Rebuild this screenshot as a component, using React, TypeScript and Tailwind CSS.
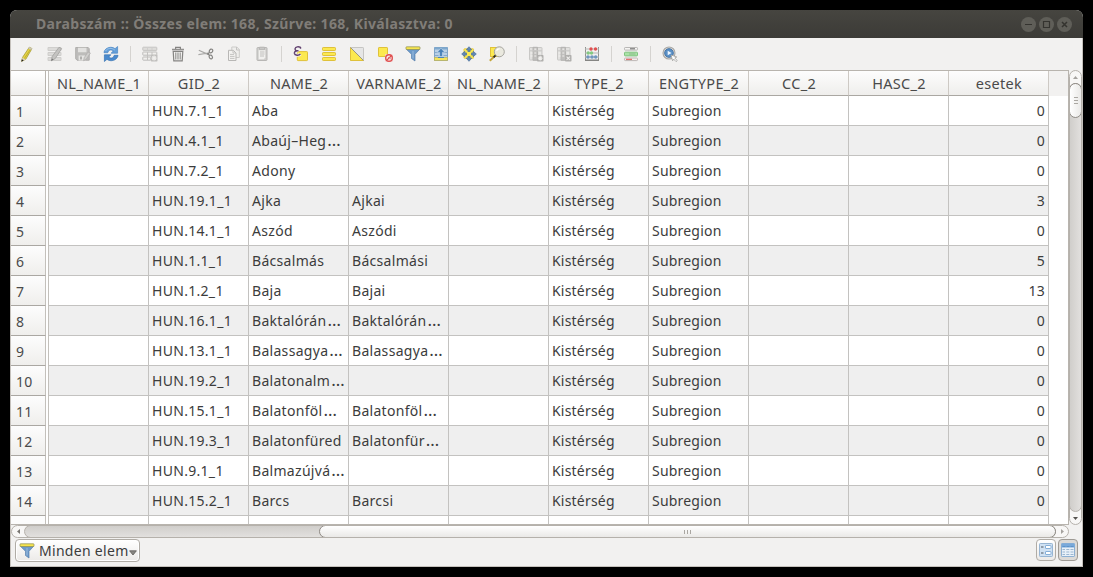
import React from "react";

const rows: [string, string, string, string][] = [
  ["HUN.7.1_1", "Aba", "", "0"],
  ["HUN.4.1_1", "Abaúj–Heg…", "", "0"],
  ["HUN.7.2_1", "Adony", "", "0"],
  ["HUN.19.1_1", "Ajka", "Ajkai", "3"],
  ["HUN.14.1_1", "Aszód", "Aszódi", "0"],
  ["HUN.1.1_1", "Bácsalmás", "Bácsalmási", "5"],
  ["HUN.1.2_1", "Baja", "Bajai", "13"],
  ["HUN.16.1_1", "Baktalórán…", "Baktalórán…", "0"],
  ["HUN.13.1_1", "Balassagya…", "Balassagya…", "0"],
  ["HUN.19.2_1", "Balatonalm…", "", "0"],
  ["HUN.15.1_1", "Balatonföl…", "Balatonföl…", "0"],
  ["HUN.19.3_1", "Balatonfüred", "Balatonfür…", "0"],
  ["HUN.9.1_1", "Balmazújvá…", "", "0"],
  ["HUN.15.2_1", "Barcs", "Barcsi", "0"],
];

const headers = ["NL_NAME_1", "GID_2", "NAME_2", "VARNAME_2", "NL_NAME_2", "TYPE_2", "ENGTYPE_2", "CC_2", "HASC_2", "esetek"];

function Icon({ children, size = 16 }: { children: React.ReactNode; size?: number }) {
  return (
    <svg width={size} height={size} viewBox="0 0 16 16" fill="none" className="block shrink-0">
      {children}
    </svg>
  );
}

const Pencil = () => (
  <Icon>
    <path d="M10.3 1.2 13 2.6 6.8 13.2 2.6 15.3 3.6 11.3Z" fill="#e6d548" stroke="#a69a35" strokeWidth=".8" />
    <path d="M12 2.5 5.2 12.7" stroke="#c0ae2d" />
    <path d="M10.2.9 13.2 2.4 12.3 4 9.3 2.4Z" fill="#c9c6bd" />
    <path d="M3.3 11.5 6.7 13.4 2.6 15.5Z" fill="#d9cdb4" />
    <path d="m2.3 15.7.6-2.4 1.8 1.1Z" fill="#222" />
  </Icon>
);
const MultiEdit = () => (
  <Icon>
    <path d="M1 1.5h13v3H1zM1 6.5h13v3H1zM1 11.5h13v3H1z" fill="#dcdbd9" stroke="#cfcecc" />
    <path d="m12 1.3 2.6 1.3-6.2 9.8-4 2.4.7-4.2Z" fill="#c4c3c1" stroke="#a2a19f" strokeWidth=".8" />
    <path d="m4 15 1-2.5 1.5 1Z" fill="#777" />
  </Icon>
);
const Save = () => (
  <Icon>
    <path d="M.7 1.5h12.5l1 1.2v11.5H2L.7 12.8Z" fill="#bdbcba" stroke="#b0afad" />
    <path d="M3 1.8h8.5v4.4H3z" fill="#e3e2e0" />
    <path d="M3.6 9.4h7v5h-7z" fill="#e6e5e3" />
    <path d="M5 10.5h2v3H5z" fill="#b0afad" />
    <path d="m13 6 2.4 1-4.2 6.4-2.6 1.3.6-3Z" fill="#cfcecc" stroke="#adacaa" strokeWidth=".7" />
  </Icon>
);
const Refresh = () => (
  <Icon>
    <path d="M1 6.2C2 1.6 8.5-.2 12 2.7L14.6.5v6.7H8.1L10.2 5C8 3 5.5 4 4.8 6.7H1Z" fill="#649fd9" stroke="#4a86c4" strokeWidth=".7" />
    <path d="M15 9.8c-1 4.6-7.5 6.4-11 3.5l-2.6 2.2V8.8h6.5L5.8 11c2.2 2 4.7 1 5.4-1.7H15Z" fill="#4a8ace" stroke="#3874b3" strokeWidth=".7" />
    <path d="M2.5 5C4.5 1.8 8.8 1.6 11.8 4" stroke="#a7caec" strokeWidth=".8" />
  </Icon>
);
const AddRow = () => (
  <Icon>
    <rect x=".8" y="1.2" width="14" height="3.2" rx=".5" fill="#deddda" stroke="#c5c4c2" />
    <rect x=".8" y="6" width="14" height="3.2" rx=".5" fill="#f0efed" stroke="#bdbcba" />
    <rect x=".8" y="11" width="8" height="3.2" rx=".5" fill="#f0efed" stroke="#bdbcba" />
    <path d="M5.5 6v8M10 6v3" stroke="#c3c2c0" />
    <path d="M5.5 1.5v2.5M10 1.5v2.5" stroke="#cfcecc" />
    <rect x="8.8" y="8.8" width="6.7" height="6.7" rx=".8" fill="#c0bfbd" />
    <path d="M12.1 9.6v5M9.6 12.1h5m-4.3-1.8 3.6 3.6m0-3.6-3.6 3.6" stroke="#efeeec" strokeWidth="1.2" />
  </Icon>
);
const Trash = () => (
  <Icon>
    <path d="M5.6 3V1.4h4.8V3M2 3.5h12M3.2 5.3h9.6l-.6 9.5H3.8Z" stroke="#858482" strokeWidth="1.2" />
    <path d="M5.8 6.5v7M8 6.5v7M10.2 6.5v7" stroke="#8e8d8b" strokeWidth="1.1" />
    <path d="M2 3.5h12" stroke="#92918f" strokeWidth="1.4" />
  </Icon>
);
const Cut = () => (
  <Icon>
    <path d="M.8 4.2 10 8.4M.4 8.7 10.5 7" stroke="#aaa9a7" strokeWidth="1.2" />
    <path d="M9.2 7.7c1-.1 1.8-.5 2.2-1.2M9.5 8c1 .1 1.6.7 2 1.5" stroke="#858482" strokeWidth="1.3" />
    <ellipse cx="13" cy="5" rx="1.6" ry="1.9" stroke="#858482" strokeWidth="1.2" transform="rotate(30 13 5)" />
    <ellipse cx="12.8" cy="11" rx="1.6" ry="1.9" stroke="#858482" strokeWidth="1.2" transform="rotate(-30 12.8 11)" />
  </Icon>
);
const Copy = () => (
  <Icon>
    <path d="M5.8 1h5l2.5 2.5v8H5.8Z" fill="#efeeec" stroke="#cccbc9" />
    <path d="M10.5 1v3h3" stroke="#c5c4c2" />
    <path d="M2.5 4.3h4.8L10 7v7.5H2.5Z" fill="#f3f2f0" stroke="#b8b7b5" />
    <path d="M7 4.3V7h3M4 8.4h4M4 10.4h4.5M4 12.4h4.5" stroke="#c4c3c1" />
  </Icon>
);
const Paste = () => (
  <Icon>
    <rect x="3" y="1.5" width="10" height="13" rx=".7" fill="#cfcecc" stroke="#b8b7b5" />
    <path d="M4.7 3.7h6.6v7.8l-1.5 1.8H4.7Z" fill="#f1f0ee" />
    <path d="M5.5 1.2h5v2.5h-5z" fill="#c9c8c6" stroke="#b8b7b5" />
    <path d="M6 6h4.5M6 8h4.5M6 10h4" stroke="#c0bfbd" />
  </Icon>
);
const Expression = () => (
  <Icon>
    <rect x="4.3" y="5.6" width="10.2" height="9" rx=".7" fill="#fce94f" stroke="#dfc13a" />
    <path d="M7.5 2.7V1.4C5.7.4 2.5.5 2.1 2.6 1.9 4 3 4.8 4.5 4.8h1-1C2.8 4.8 1.2 5.6 1.4 7.4 1.7 9.6 6 9.8 7.4 8" stroke="#f3f2f0" strokeWidth="3" />
    <path d="M7.5 2.7V1.4C5.7.4 2.5.5 2.1 2.6 1.9 4 3 4.8 4.5 4.8h1-1C2.8 4.8 1.2 5.6 1.4 7.4 1.7 9.6 6 9.8 7.4 8" stroke="#624270" strokeWidth="1.4" />
  </Icon>
);
const SelectAll = () => (
  <Icon>
    {[1.5, 6.5, 11.5].map((y) => (
      <rect key={y} x="1.5" y={y} width="13" height="3" rx=".7" fill="#fce94f" stroke="#dfc13a" />
    ))}
  </Icon>
);
const Invert = () => (
  <Icon>
    <rect x="1.5" y="1.5" width="13" height="13" rx=".6" fill="#e6e6e6" stroke="#c6c5c3" />
    <path d="M1.5 1.5v13h13Z" fill="#fce94f" />
    <path d="M14.5 14.5h-13v-13" stroke="#dfc13a" />
    <path d="m1.5 1.5 13 13" stroke="#8f8c80" strokeWidth=".9" />
  </Icon>
);
const Deselect = () => (
  <Icon>
    <rect x="1.5" y="1.5" width="9" height="9" rx=".6" fill="#fce94f" stroke="#dfc13a" />
    <rect x="8" y="8" width="8" height="8" rx="1" fill="#f3dddd" />
    <circle cx="12" cy="12" r="3.3" fill="#f6e6e6" stroke="#e05050" strokeWidth="1.4" />
    <path d="m9.6 14.4 4.8-4.8" stroke="#dc4949" strokeWidth="1.2" />
    <path d="M11 11.5h2.2v1.8" stroke="#dc6969" strokeWidth=".8" />
  </Icon>
);
const Funnel = ({ size = 16 }: { size?: number }) => (
  <Icon size={size}>
    <path d="M1.3 3.2h13.4L10 8.3V15L6.5 12.5V8.3Z" fill="#6d9ac9" stroke="#5880ad" strokeWidth=".7" />
    <path d="M8 5v7.5" stroke="#8eb2d8" strokeWidth="1.4" />
    <rect x="1" y=".8" width="14" height="2.7" rx=".6" fill="#f7e54d" stroke="#8a8c58" strokeWidth=".7" />
  </Icon>
);
const MoveTop = () => (
  <Icon>
    <path d="M1.5 1.5h13v13h-13z" fill="#b9d0e6" stroke="#7fa4c7" />
    <path d="M1.5 1.5h13v2h-13z" fill="#7fa8ce" />
    <path d="M2 6.5h3.5M10.5 6.5H14M2 9.5h3.5M10.5 9.5H14" stroke="#86a9ca" />
    <path d="m8 2.2 3.9 4.2H9.4v4.1H6.6V6.4H4.1Z" fill="#4780b8" stroke="#d5e4f2" strokeWidth=".5" />
    <rect x="1.5" y="11.5" width="13" height="3" fill="#f5e45b" stroke="#b9b268" strokeWidth=".8" />
    <path d="M5 11.5h6" stroke="#4c85bb" />
  </Icon>
);
const Pan = () => (
  <Icon>
    <rect x="3" y="2.8" width="9.5" height="9.5" rx=".5" fill="#fce94f" stroke="#e6cc4a" />
    <path d="m8 .7 2.7 3.1H9.1v1.7H6.9V3.8H5.3ZM8 15.3l2.7-3.1H9.1v-1.7H6.9v1.7H5.3ZM.7 8l3.1-2.7v1.6h1.7v2.2H3.8v1.6ZM15.3 8l-3.1-2.7v1.6h-1.7v2.2h1.7v1.6Z" fill="#6288b5" stroke="#4c719c" strokeWidth=".7" />
  </Icon>
);
const ZoomTo = () => (
  <Icon>
    <rect x="1.5" y="1.5" width="8.5" height="9" fill="#fce94f" stroke="#dfc13a" />
    <path d="M5.8 10 .8 14.8" stroke="#c5a638" strokeWidth="2" />
    <path d="m7 8.9-2.4 2.4" stroke="#292826" strokeWidth="1.8" />
    <circle cx="10.3" cy="5.8" r="5" fill="#e9e8dd" fillOpacity=".95" stroke="#a6a59f" />
    <path d="M7.6 4.8c.5-1.5 1.7-2 3-1.9" stroke="#fff" strokeWidth="1.3" />
  </Icon>
);
const FieldIcon = ({ remove = false }: { remove?: boolean }) => (
  <Icon>
    <rect x="1.5" y="1.5" width="12.5" height="12.5" rx=".5" fill="#e2e1df" stroke="#c9c8c6" />
    <path d="M5 1.3h4.5v13H5z" fill="#c0bfbd" stroke="#b6b5b3" />
    <path d="M1.5 4.8h12.5" stroke="#c9c8c6" />
    <path d="M2.5 7h2M2.5 10h2M6.3 3.2h2M6.3 7h2M6.3 10h2M11 7h2" stroke="#f2f1ef" strokeWidth="1.2" />
    <rect x="9" y="9" width="6.5" height="6.5" rx=".8" fill="#b0afad" />
    <path d={remove ? "m10.6 10.6 3.3 3.3m0-3.3-3.3 3.3" : "M12.2 9.8v4.8M9.8 12.2h4.8m-4-1.6 3.2 3.2m0-3.2-3.2 3.2"} stroke="#f0efed" strokeWidth="1.1" />
  </Icon>
);
const Abacus = () => (
  <Icon>
    <path d="M1.5 1v14M14.5 1v14" stroke="#90938f" />
    <path d="M1 3h14M1 7h14M1 11h14" stroke="#b6b7b5" />
    <path d="M1 14.3h14" stroke="#858583" strokeWidth="1.4" />
    {[7, 11.5].map((x) => <circle key={x} cx={x} cy="3" r="1.7" fill="#e05050" />)}
    {[4.2, 7.5].map((x) => <circle key={x} cx={x} cy="7" r="1.7" fill="#84c882" />)}
    {[4, 8, 11.7].map((x) => <circle key={x} cx={x} cy="11" r="1.8" fill="#7097be" />)}
  </Icon>
);
const Conditional = () => (
  <Icon>
    <rect x="1.5" y="1.5" width="13" height="2.6" rx=".7" fill="#f5f4f2" stroke="#b8b7b5" />
    <path d="M7 2.8h5" stroke="#666" />
    <rect x="1.5" y="6.2" width="13" height="3.7" rx=".7" fill="#a9e2a7" stroke="#80c480" />
    <path d="M6 8h6.5" stroke="#8cba8a" />
    <rect x="1.5" y="12" width="13" height="2.6" rx=".7" fill="#f7efed" stroke="#beb8b6" />
    <path d="M3 13.3h6" stroke="#df5050" />
  </Icon>
);
const Action = () => (
  <Icon>
    <circle cx="7" cy="7" r="6" fill="#d9d8d6" stroke="#a9a8a6" strokeWidth="1.1" />
    <circle cx="7" cy="7" r="4.3" fill="#5a91c8" stroke="#4674a5" />
    <path d="m5.7 4.8 3.8 2.3-3.8 2.2Z" fill="#eef6ff" />
    <path d="m9 9 5.8 2-2 .9 2.4 2.7-1.2 1-2.4-2.6-1 1.8Z" fill="#fff" stroke="#a09f9d" strokeWidth=".8" />
  </Icon>
);
const FormView = () => (
  <Icon>
    <rect x="1.5" y="1.5" width="13" height="13" rx=".8" fill="#d0e1f2" stroke="#97b5d3" />
    <path d="M3 5h2.5M3 11h2.5" stroke="#4c5862" strokeWidth="1.2" />
    <rect x="7.5" y="3.5" width="5.5" height="3" rx=".5" fill="#fff" stroke="#86afd8" />
    <rect x="7.5" y="9.5" width="5.5" height="3" rx=".5" fill="#fff" stroke="#86afd8" />
  </Icon>
);
const TableView = () => (
  <Icon>
    <rect x="1.5" y="1.5" width="13" height="13" rx=".6" fill="#e8f0f8" stroke="#8db0d2" />
    <path d="M1.5 1.5h13v4h-13z" fill="#79a9da" />
    <path d="M2.5 4.5h3M6.5 4.5h3M10.5 4.5h3" stroke="#5d92c9" />
    <path d="M2.5 7.5H5M6.3 7.5h3M10.5 7.5h3M2.5 10H5M6.3 10h3M10.5 10h3M2.5 12.5H5M6.3 12.5h3M10.5 12.5h3" stroke="#9cb7d1" />
  </Icon>
);

function Tool({ children }: { children: React.ReactNode }) {
  return <button className="flex h-8 w-7 shrink-0 items-center justify-center">{children}</button>;
}
function Separator() {
  return (
    <div className="flex w-[11px] shrink-0 justify-center">
      <div className="h-4 w-px bg-[#d5d3d0]" />
    </div>
  );
}

function Label({ text }: { text: string }) {
  if (!text.endsWith("…")) return <span>{text}</span>;
  return (
    <span>
      {text.slice(0, -1)}
      <span className="ml-px text-[17px] leading-[0]">…</span>
    </span>
  );
}

function Cell({ text = "", right, tight }: { text?: string; right?: boolean; tight?: boolean }) {
  return (
    <div className={`flex h-[30px] w-[100px] shrink-0 items-center overflow-hidden border-r border-b border-[#c3c2c0] pt-px pl-[3px] whitespace-nowrap ${tight ? "tracking-[0.2px]" : "tracking-[0.3px]"} ${right ? "justify-end pr-[3px]" : ""}`}>
      <Label text={text} />
    </div>
  );
}

function WindowButton({ children }: { children: React.ReactNode }) {
  return (
    <div className="flex size-[15px] items-center justify-center rounded-full bg-[#5f5e58]">
      <svg width="9" height="9" viewBox="0 0 9 9" fill="none" stroke="#34332f" strokeWidth="1.2">{children}</svg>
    </div>
  );
}

export default function App() {
  return (
    <div className="h-[577px] w-[1093px] overflow-hidden bg-black pt-2.5 pl-2.5 font-['Noto_Sans','Open_Sans',sans-serif] text-[14px] leading-5 text-[#3c3c3c]">
      <div className="flex h-[557px] w-[1073px] flex-col overflow-hidden rounded-t-[7px] bg-[#f2f1f0]">
        <div className="flex h-7 shrink-0 items-center bg-linear-to-b from-[#464540] to-[#3c3b37] pr-[11px] pl-[26px]">
          <span className="text-[14px] font-bold tracking-[0.33px] whitespace-nowrap text-[#807d78]">Darabszám :: Összes elem: 168, Szűrve: 168, Kiválasztva: 0</span>
          <div className="ml-auto flex gap-[3px] pt-px">
            <WindowButton><path d="M1 4.5h7" /></WindowButton>
            <WindowButton><path d="M1.5 1.5h6v6h-6z" /></WindowButton>
            <WindowButton><path d="m2 2 5 5m0-5-5 5" strokeWidth="1.5" /></WindowButton>
          </div>
        </div>

        <div className="flex min-h-0 flex-1 flex-col border-r border-b border-l border-[#c5c1bc]">
          <div className="flex h-8 shrink-0 items-center pl-[2px]">
            <Tool><Pencil /></Tool><Tool><MultiEdit /></Tool><Tool><Save /></Tool><Tool><Refresh /></Tool>
            <Separator />
            <Tool><AddRow /></Tool><Tool><Trash /></Tool><Tool><Cut /></Tool><Tool><Copy /></Tool><Tool><Paste /></Tool>
            <Separator />
            <Tool><Expression /></Tool><Tool><SelectAll /></Tool><Tool><Invert /></Tool><Tool><Deselect /></Tool>
            <Tool><Funnel /></Tool><Tool><MoveTop /></Tool><Tool><Pan /></Tool><Tool><ZoomTo /></Tool>
            <Separator />
            <Tool><FieldIcon /></Tool><Tool><FieldIcon remove /></Tool><Tool><Abacus /></Tool>
            <Separator />
            <Tool><Conditional /></Tool>
            <Separator />
            <Tool><Action /></Tool>
          </div>

          <div className="flex h-[455px] shrink-0">
            <div className="flex w-[1058px] shrink-0 flex-col overflow-hidden border-y border-r border-[#b8b4ae] bg-white">
              <div className="flex h-[25px] shrink-0 bg-[#f2f1f0]">
                <div className="w-[35px] shrink-0 border-r border-b border-[#b8b4ae] bg-linear-to-b from-white to-[#efeeec]" />
                <div className="w-[3px] shrink-0 border-r border-b border-[#c3c0bb] bg-white" />
                {headers.map((h) => (
                  <div key={h} className="flex w-[100px] shrink-0 items-center justify-center border-r border-b border-r-[#cdc9c4] border-b-[#aaa7a2] bg-linear-to-b from-[#fdfdfd] to-[#efeeec] pl-px text-[14.5px] tracking-[0.3px] whitespace-nowrap text-[#4a4a4a]">
                    {h}
                  </div>
                ))}
              </div>
              {rows.map(([gid, name, variant, count], i) => (
                <div key={gid} className="flex h-[30px] shrink-0">
                  <div className="flex w-[35px] shrink-0 items-center border-r border-b border-r-[#c3c0bb] border-b-[#aaa7a2] bg-linear-to-b from-[#fdfdfd] to-[#efeeec] pt-[3px] pl-[5px] tracking-[0.3px] text-[#4a4a4a]">{i + 1}</div>
                  <div className="w-[3px] shrink-0 border-r border-[#c3c0bb] bg-white" />
                  <div className={i % 2 ? "flex bg-[#efefef]" : "flex bg-white"}>
                    <Cell />
                    <Cell text={gid} />
                    <Cell text={name} />
                    <Cell text={variant} />
                    <Cell />
                    <Cell text="Kistérség" tight />
                    <Cell text="Subregion" tight />
                    <Cell />
                    <Cell />
                    <Cell text={count} right />
                  </div>
                </div>
              ))}
              <div className="flex h-[8px] shrink-0">
                <div className="w-[35px] shrink-0 border-r border-[#c3c0bb] bg-[#fcfcfc]" />
                <div className="w-[3px] shrink-0 border-r border-[#c3c0bb]" />
                {headers.map((h) => <div key={h} className="w-[100px] shrink-0 border-r border-[#c3c2c0]" />)}
              </div>
            </div>

            <div className="flex w-[13px] shrink-0 flex-col overflow-hidden rounded-full border border-[#b5b1ab] bg-[#f8f7f6]">
              <div className="flex h-[12px] shrink-0 items-center justify-center">
                <svg width="5" height="3" viewBox="0 0 5 3"><path d="m0 3 2.5-3L5 3Z" fill="#a5a29e" /></svg>
              </div>
              <div className="-mx-px flex min-h-0 flex-1 flex-col rounded-full border border-[#b5b1ab] bg-linear-to-r from-[#d0cecb] to-[#e2e0de]">
                <div className="-mx-px -mt-px flex h-[35px] shrink-0 flex-col items-center justify-center gap-[2px] rounded-full border border-[#8f8b85] bg-linear-to-r from-white to-[#eae9e7]">
                  <div className="h-px w-[4px] bg-[#aaa7a2]" /><div className="h-px w-[4px] bg-[#aaa7a2]" /><div className="h-px w-[4px] bg-[#aaa7a2]" />
                </div>
              </div>
              <div className="flex h-[12px] shrink-0 items-center justify-center">
                <svg width="5" height="3" viewBox="0 0 5 3"><path d="m0 0 2.5 3L5 0Z" fill="#565450" /></svg>
              </div>
            </div>
          </div>

          <div className="flex h-[13px] w-[1058px] shrink-0 overflow-hidden rounded-full border border-[#b5b1ab] bg-[#f8f7f6]">
            <div className="flex w-[12px] shrink-0 items-center justify-center">
              <svg width="3" height="5" viewBox="0 0 3 5"><path d="M3 0 0 2.5 3 5Z" fill="#777470" /></svg>
            </div>
            <div className="-my-px flex w-[1032px] shrink-0 rounded-full border border-[#b5b1ab] bg-linear-to-b from-[#d0cecb] to-[#e2e0de]">
              <div className="-my-px -mr-px ml-auto flex w-[737px] items-center justify-center gap-[2px] rounded-full border border-[#8f8b85] bg-linear-to-b from-white to-[#eae9e7]">
                <div className="h-[4px] w-px bg-[#aaa7a2]" /><div className="h-[4px] w-px bg-[#aaa7a2]" /><div className="h-[4px] w-px bg-[#aaa7a2]" />
              </div>
            </div>
            <div className="flex flex-1 items-center justify-center">
              <svg width="3" height="5" viewBox="0 0 3 5"><path d="m0 0 3 2.5L0 5Z" fill="#a5a29e" /></svg>
            </div>
          </div>

          <div className="flex flex-1 items-start pt-px pr-[4px] pl-[4px]">
            <button className="flex h-[23px] w-[125px] items-center rounded-[4px] border border-[#b0aca6] bg-linear-to-b from-white to-[#eceae8] pl-[3px] shadow-[inset_0_0_0_1px_#fff]">
              <Funnel />
              <span className="ml-[4px] w-[90px] text-left tracking-[0.3px] whitespace-nowrap">Minden elem</span>
              <svg width="8" height="6" viewBox="0 0 8 6" className="mt-[5px] shrink-0"><path d="M.6.8h6.8L4 5Z" fill="#888682" stroke="#5d5b57" strokeWidth=".8" /></svg>
            </button>
            <div className="ml-auto flex gap-[2px]">
              <button className="flex h-[22px] w-[20px] items-center justify-center rounded-[4px] border border-[#b0aca6] bg-linear-to-b from-white to-[#eceae8]"><FormView /></button>
              <button className="flex h-[22px] w-[20px] items-center justify-center rounded-[4px] border border-[#9e9a94] bg-[#dcdad7]"><TableView /></button>
            </div>
          </div>
        </div>
      </div>
    </div>
  );
}
